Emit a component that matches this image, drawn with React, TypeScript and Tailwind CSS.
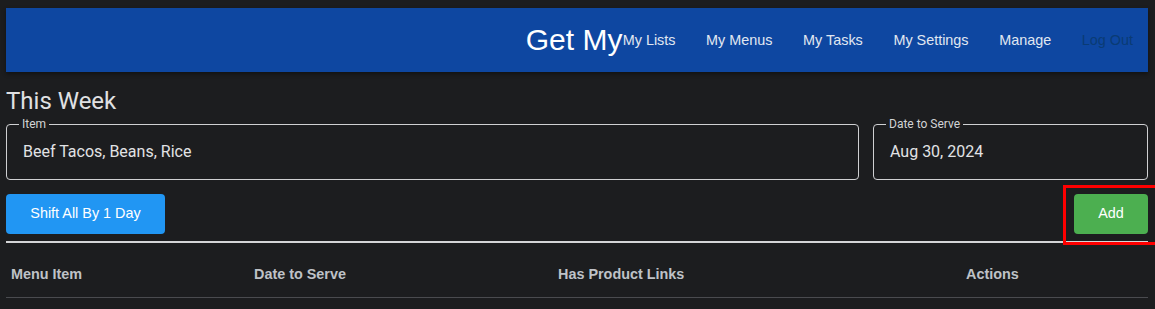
import React from "react";

const sans = { fontFamily: '"Liberation Sans", Arial, sans-serif' };
const roboto = { fontFamily: 'Roboto, "Noto Sans", sans-serif' };

function Field({ label, value, className }: { label: string; value: string; className: string }) {
  return (
    <div
      className={`relative h-[56px] rounded-[4px] border border-[#cfd0d2] flex items-center pl-[16px] ${className}`}
    >
      <span
        className="absolute top-[-7px] left-[12px] px-[3px] bg-[#1c1d1f] text-[12px] leading-[12px] text-[#d2d3d5]"
        style={roboto}
      >
        {label}
      </span>
      <span className="text-[16px] text-[#e2e3e5]" style={roboto}>
        {value}
      </span>
    </div>
  );
}

export default function App() {
  const links = ["My Lists", "My Menus", "My Tasks", "My Settings", "Manage"];
  return (
    <div className="min-h-[309px] bg-[#1c1d1f] pl-[6px] pr-[7px] pt-[8px] overflow-hidden">
      <header
        className="h-[64px] bg-[#0e47a1] flex items-center justify-end pr-[15px] shadow-[0_2px_4px_rgba(0,0,0,0.4)]"
        style={sans}
      >
        <span className="text-[30px] leading-none text-white mr-[-15px]">Get My</span>
        {links.map((l) => (
          <a key={l} className="px-[15.3px] pt-[2px] text-[14.4px] text-[#e1e7f1]">
            {l}
          </a>
        ))}
        <a className="pl-[15.3px] pt-[2px] text-[14.4px] text-[#0a3b74]">Log Out</a>
      </header>

      <h1 className="mt-[14px] text-[24px] leading-[30px] text-[#e0e1e3]" style={roboto}>
        This Week
      </h1>

      <div className="mt-[8px] flex gap-[14px]">
        <Field label="Item" value="Beef Tacos, Beans, Rice" className="flex-1" />
        <Field label="Date to Serve" value="Aug 30, 2024" className="w-[275px]" />
      </div>

      <div className="mt-[14px] flex justify-between items-start" style={sans}>
        <button className="h-[40px] w-[159px] rounded-[4px] bg-[#2196f3] text-[14.4px] text-white">
          Shift All By 1 Day
        </button>
        <div className="relative">
          <button className="h-[40px] w-[74px] rounded-[4px] bg-[#4caf50] text-[14.4px] text-white">
            Add
          </button>
          <div className="absolute left-[-11px] top-[-9px] h-[60px] w-[110px] border-[3px] border-[#f00] pointer-events-none" />
        </div>
      </div>

      <div className="mt-[7px] h-[2px] bg-[#d4d5d7]" />

      <div
        className="mt-[8px] grid grid-cols-[243px_304px_408px_1fr] h-[47px] pt-[2px] items-center border-b border-[#4a4b4f] text-[14.4px] font-bold text-[#bfc2c7]"
        style={sans}
      >
        <div className="pl-[5px]">Menu Item</div>
        <div className="pl-[5px]">Date to Serve</div>
        <div className="pl-[5px]">Has Product Links</div>
        <div className="pl-[5px]">Actions</div>
      </div>
    </div>
  );
}
